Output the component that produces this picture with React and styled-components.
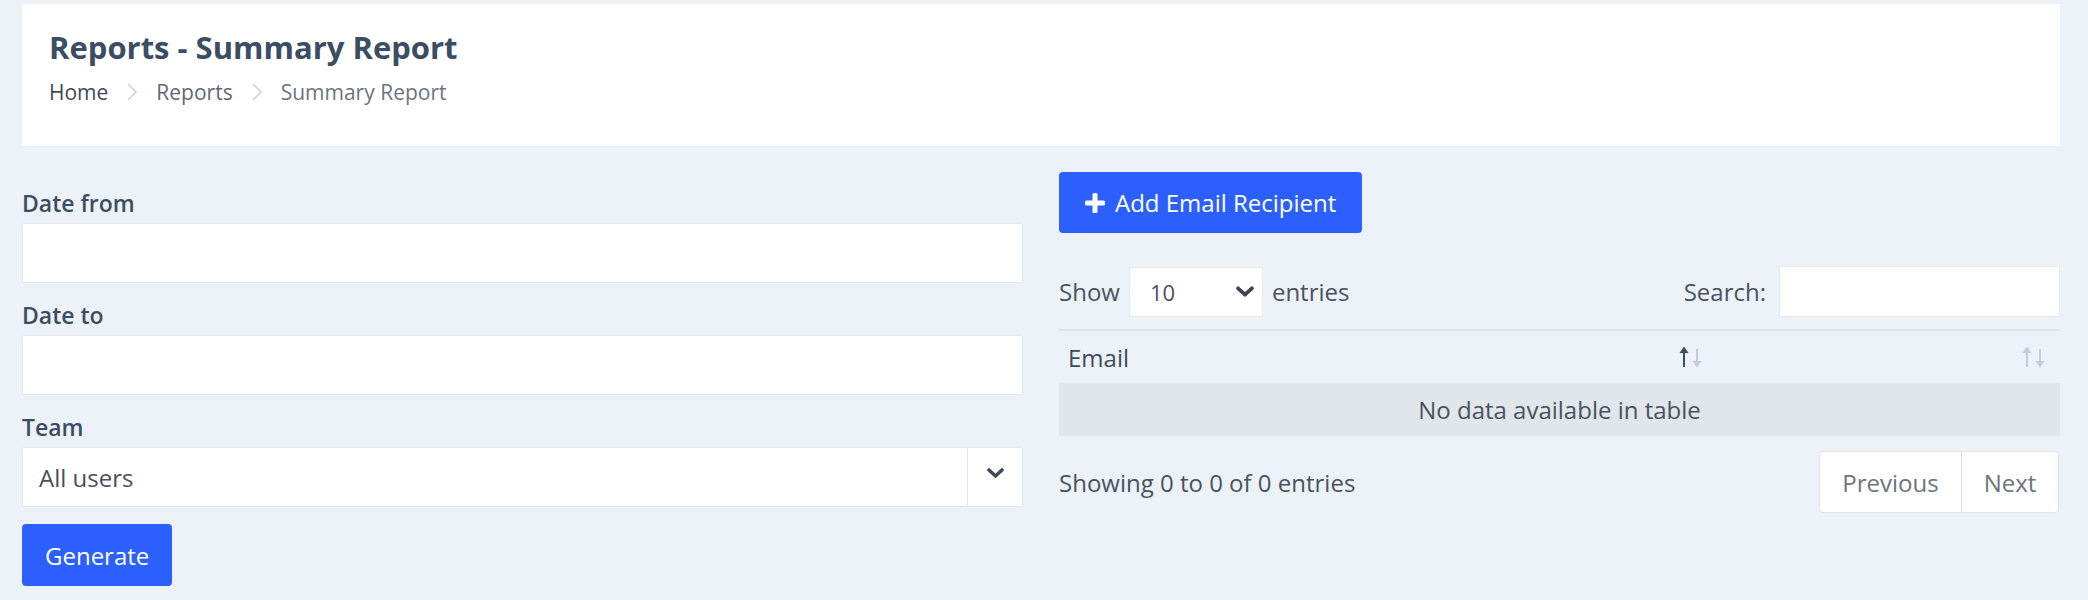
import React from "react";
import styled, { createGlobalStyle } from "styled-components";

const GlobalStyle = createGlobalStyle`
  html, body { margin: 0; padding: 0; }
  body {
    background: #ecf2f7;
    font-family: "Open Sans", "Noto Sans", sans-serif;
    color: #4a5260;
  }
  * { box-sizing: border-box; }
`;

const Page = styled.div`
  padding: 4px 28px 0 22px;
`;

const HeaderCard = styled.div`
  background: #ffffff;
  height: 142px;
  padding: 24px 27px 0;
`;

const Title = styled.h1`
  margin: 0;
  font-size: 31px;
  line-height: 38px;
  font-weight: 700;
  color: #3b4d63;
`;

const Crumbs = styled.nav`
  display: flex;
  align-items: center;
  margin-top: 12px;
  font-size: 21px;
  line-height: 28px;
`;

const Crumb = styled.span`
  color: ${(p) => (p.$active ? "#6b7480" : p.$first ? "#3f4a58" : "#5f6874")};
`;

const Sep = styled.span`
  display: inline-flex;
  margin: 0 19px 0 19px;
  color: #c5cbd1;
`;

const Columns = styled.div`
  display: grid;
  grid-template-columns: 1fr 1fr;
  column-gap: 36px;
  margin-top: 26px;
`;

const FormCol = styled.div`
  padding-top: 16px;
`;

const Group = styled.div`
  margin-bottom: 17px;
`;

const Label = styled.label`
  display: block;
  font-size: 23px;
  line-height: 30px;
  font-weight: 600;
  color: #3b4d63;
  margin-bottom: 5px;
`;

const Input = styled.input`
  display: block;
  width: 100%;
  height: 60px;
  border: 1px solid #e3e8ec;
  border-radius: 2px;
  background: #fff;
  outline: none;
  font: inherit;
  padding: 0 16px;
`;

const SelectBox = styled.div`
  display: flex;
  height: 60px;
  background: #fff;
  border: 1px solid #e3e8ec;
  border-radius: 2px;
`;

const SelectValue = styled.div`
  flex: 1;
  display: flex;
  align-items: center;
  padding-left: 16px;
  font-size: 24px;
  color: #4a4f5c;
`;

const SelectArrow = styled.div`
  width: 55px;
  display: flex;
  align-items: center;
  justify-content: center;
  border-left: 1px solid #e3e8ec;
  padding-bottom: 8px;
`;

const PrimaryButton = styled.button`
  display: inline-flex;
  align-items: center;
  gap: 10px;
  height: ${(p) => p.$h || 62}px;
  padding: 0 ${(p) => p.$px || 25}px;
  border: none;
  border-radius: 4px;
  background: #2b60ff;
  color: #fff;
  font-family: inherit;
  font-size: 24px;
  cursor: pointer;
`;

const TableCol = styled.div``;

const Controls = styled.div`
  display: flex;
  justify-content: space-between;
  align-items: center;
  margin-top: 33px;
  font-size: 24px;
  color: #4a5260;
`;

const Inline = styled.div`
  display: flex;
  align-items: center;
  gap: 9px;
`;

const LengthSelect = styled.div`
  width: 134px;
  height: 50px;
  background: #fff;
  border: 1px solid #e6eaee;
  border-radius: 2px;
  display: flex;
  align-items: center;
  justify-content: space-between;
  padding: 0 8px 0 20px;
  font-size: 22px;
  color: #4a4f5c;
`;

const SearchInput = styled.input`
  width: 281px;
  height: 51px;
  background: #fff;
  border: 1px solid #e6eaee;
  border-radius: 2px;
  outline: none;
  margin-left: 4px;
`;

const Table = styled.div`
  margin-top: 12px;
  border-top: 2px solid #dde3e8;
`;

const HeadRow = styled.div`
  display: grid;
  grid-template-columns: 658px 1fr;
  height: 52px;
`;

const HeadCell = styled.div`
  display: flex;
  align-items: center;
  justify-content: space-between;
  padding: 0 12px 0 9px;
  font-size: 24px;
  color: #3d4b5c;
`;

const EmptyRow = styled.div`
  height: 53px;
  background: #e0e6ea;
  display: flex;
  align-items: center;
  justify-content: center;
  font-size: 24px;
  color: #4a5260;
`;

const Footer = styled.div`
  display: flex;
  justify-content: space-between;
  align-items: center;
  margin-top: 15px;
  font-size: 24px;
  color: #4a5260;
`;

const Pager = styled.div`
  display: flex;
  border: 1px solid #dfe3e7;
  border-radius: 4px;
  background: #fff;
  margin-right: 1px;
`;

const PageBtn = styled.div`
  height: 60px;
  width: ${(p) => p.$w}px;
  display: flex;
  align-items: center;
  justify-content: center;
  font-size: 24px;
  color: #6c757d;
  border-left: ${(p) => (p.$divider ? "1px solid #dfe3e7" : "none")};
`;

const Chevron = ({ w = 17, h = 10, color = "#454a58" }) => (
  <svg width={w} height={h} viewBox="0 0 17 10" fill="none">
    <polyline
      points="2,2 8.5,8 15,2"
      stroke={color}
      strokeWidth="3.6"
      strokeLinecap="round"
      strokeLinejoin="round"
    />
  </svg>
);

const CrumbChevron = () => (
  <svg width="10" height="20" viewBox="0 0 10 20" fill="none">
    <polyline points="1,2 9,10 1,18" stroke="#c8ced4" strokeWidth="1.4" />
  </svg>
);

const SortIcon = ({ upActive }) => {
  const up = upActive ? "#3b4d63" : "#c5ccd3";
  const down = "#c5ccd3";
  return (
    <svg width="26" height="22" viewBox="0 0 26 22">
      <line x1="5" y1="4" x2="5" y2="21" stroke={up} strokeWidth="2" />
      <polygon points="0.5,7 5,0.5 9.5,7" fill={up} />
      <line x1="18" y1="3" x2="18" y2="17" stroke={down} strokeWidth="2" />
      <polygon points="13.5,15 18,21.5 22.5,15" fill={down} />
    </svg>
  );
};

const PlusIcon = () => (
  <svg width="20" height="20" viewBox="0 0 20 20">
    <rect x="7.5" y="0" width="5" height="20" rx="1.5" fill="#fff" />
    <rect x="0" y="7.5" width="20" height="5" rx="1.5" fill="#fff" />
  </svg>
);

export default function App() {
  return (
    <>
      <GlobalStyle />
      <Page>
        <HeaderCard>
          <Title>Reports - Summary Report</Title>
          <Crumbs>
            <Crumb $first>Home</Crumb>
            <Sep>
              <CrumbChevron />
            </Sep>
            <Crumb>Reports</Crumb>
            <Sep>
              <CrumbChevron />
            </Sep>
            <Crumb $active>Summary Report</Crumb>
          </Crumbs>
        </HeaderCard>

        <Columns>
          <FormCol>
            <Group>
              <Label>Date from</Label>
              <Input type="text" />
            </Group>
            <Group>
              <Label>Date to</Label>
              <Input type="text" />
            </Group>
            <Group>
              <Label>Team</Label>
              <SelectBox>
                <SelectValue>All users</SelectValue>
                <SelectArrow>
                  <Chevron />
                </SelectArrow>
              </SelectBox>
            </Group>
            <PrimaryButton $h={62} $px={23}>Generate</PrimaryButton>
          </FormCol>

          <TableCol>
            <PrimaryButton $h={61} $px={26}>
              <PlusIcon />
              Add Email Recipient
            </PrimaryButton>

            <Controls>
              <Inline>
                <span>Show</span>
                <LengthSelect>
                  <span>10</span>
                  <Chevron w={18} h={11} color="#3f4450" />
                </LengthSelect>
                <span>entries</span>
              </Inline>
              <Inline>
                <span>Search:</span>
                <SearchInput type="text" />
              </Inline>
            </Controls>

            <Table>
              <HeadRow>
                <HeadCell>
                  <span>Email</span>
                  <SortIcon upActive />
                </HeadCell>
                <HeadCell>
                  <span />
                  <SortIcon />
                </HeadCell>
              </HeadRow>
              <EmptyRow>No data available in table</EmptyRow>
            </Table>

            <Footer>
              <span>Showing 0 to 0 of 0 entries</span>
              <Pager>
                <PageBtn $w={141}>Previous</PageBtn>
                <PageBtn $w={97} $divider>
                  Next
                </PageBtn>
              </Pager>
            </Footer>
          </TableCol>
        </Columns>
      </Page>
    </>
  );
}
